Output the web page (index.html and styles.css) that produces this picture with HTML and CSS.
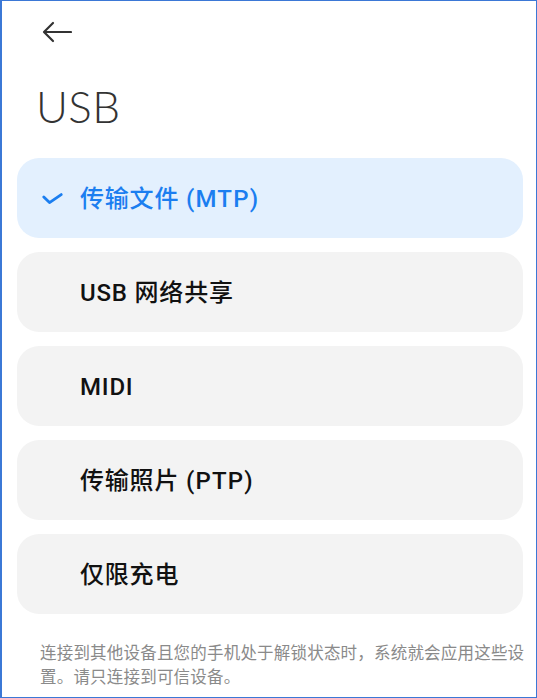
FILE: index.html
```html
<!DOCTYPE html>
<html lang="zh-CN">
<head>
<meta charset="utf-8">
<title>USB</title>
<link rel="stylesheet" href="styles.css">
</head>
<body>
<div class="screen">
  <header class="topbar">
    <button class="back" aria-label="返回">
      <svg width="30" height="22" viewBox="0 0 30 22" fill="none" stroke="#333" stroke-width="2.2" stroke-linecap="round" stroke-linejoin="round">
        <path d="M29 11 H3"/>
        <path d="M11 2 L2 11 L11 20"/>
      </svg>
    </button>
  </header>
  <h1 class="title">USB</h1>
  <ul class="options">
    <li class="option selected">
      <span class="mark">
        <svg width="21" height="12" viewBox="0 0 21 12" fill="none" stroke="#1b7ef0" stroke-width="2.8" stroke-linecap="round" stroke-linejoin="round">
          <path d="M1.8 4 L7.5 9.6 L19.2 1.6"/>
        </svg>
      </span>
      <span class="label">传输文件 <span class="paren">(MTP)</span></span>
    </li>
    <li class="option"><span class="mark"></span><span class="label">USB 网络共享</span></li>
    <li class="option"><span class="mark"></span><span class="label">MIDI</span></li>
    <li class="option"><span class="mark"></span><span class="label">传输照片 <span class="paren">(PTP)</span></span></li>
    <li class="option"><span class="mark"></span><span class="label">仅限充电</span></li>
  </ul>
  <p class="note">连接到其他设备且您的手机处于解锁状态时，系统就会应用这些设置。请只连接到可信设备。</p>
</div>
</body>
</html>
```

FILE: styles.css
```css
html, body {
  margin: 0;
  padding: 0;
  background: #ffffff;
}

.screen {
  box-sizing: border-box;
  width: 537px;
  height: 698px;
  overflow: hidden;
  border: 1px solid #3b78d6;
  border-left-width: 2px;
  padding: 0 13px 0 15px;
  font-family: Roboto, "Noto Sans CJK SC", sans-serif;
}

.topbar {
  display: flex;
  padding-top: 20px;
  padding-left: 25px;
}

.back {
  display: flex;
  padding: 0;
  margin: 0;
  border: 0;
  background: none;
  width: 30px;
  height: 22px;
}

.title {
  margin: 41px 0 0 19px;
  font-family: "Lato", "Noto Sans", sans-serif;
  font-weight: 300;
  font-size: 44px;
  line-height: 44px;
  color: #333333;
  letter-spacing: 0.3px;
}

.options {
  list-style: none;
  margin: 30px 0 0 0;
  padding: 0;
  display: flex;
  flex-direction: column;
  gap: 14px;
}

.option {
  display: flex;
  align-items: center;
  height: 80px;
  box-sizing: border-box;
  padding: 2px 0 0 25px;
  border-radius: 22px;
  background: #f3f3f3;
  color: #111111;
}

.option.selected {
  background: #e3f0fe;
  color: #1b7ef0;
}

.mark {
  display: flex;
  align-items: center;
  width: 38px;
  flex: none;
}

.label {
  font-family: Roboto, "Noto Sans CJK SC", sans-serif;
  font-size: 24px;
  font-weight: 500;
  line-height: 30px;
  letter-spacing: 0.8px;
}

.paren {
  letter-spacing: 1.2px;
}

.note {
  margin: 26px -12px 0 23px;
  font-family: "Noto Sans CJK SC", sans-serif;
  font-size: 16.5px;
  line-height: 24px;
  letter-spacing: 0.2px;
  color: #8a8a8a;
}
```
